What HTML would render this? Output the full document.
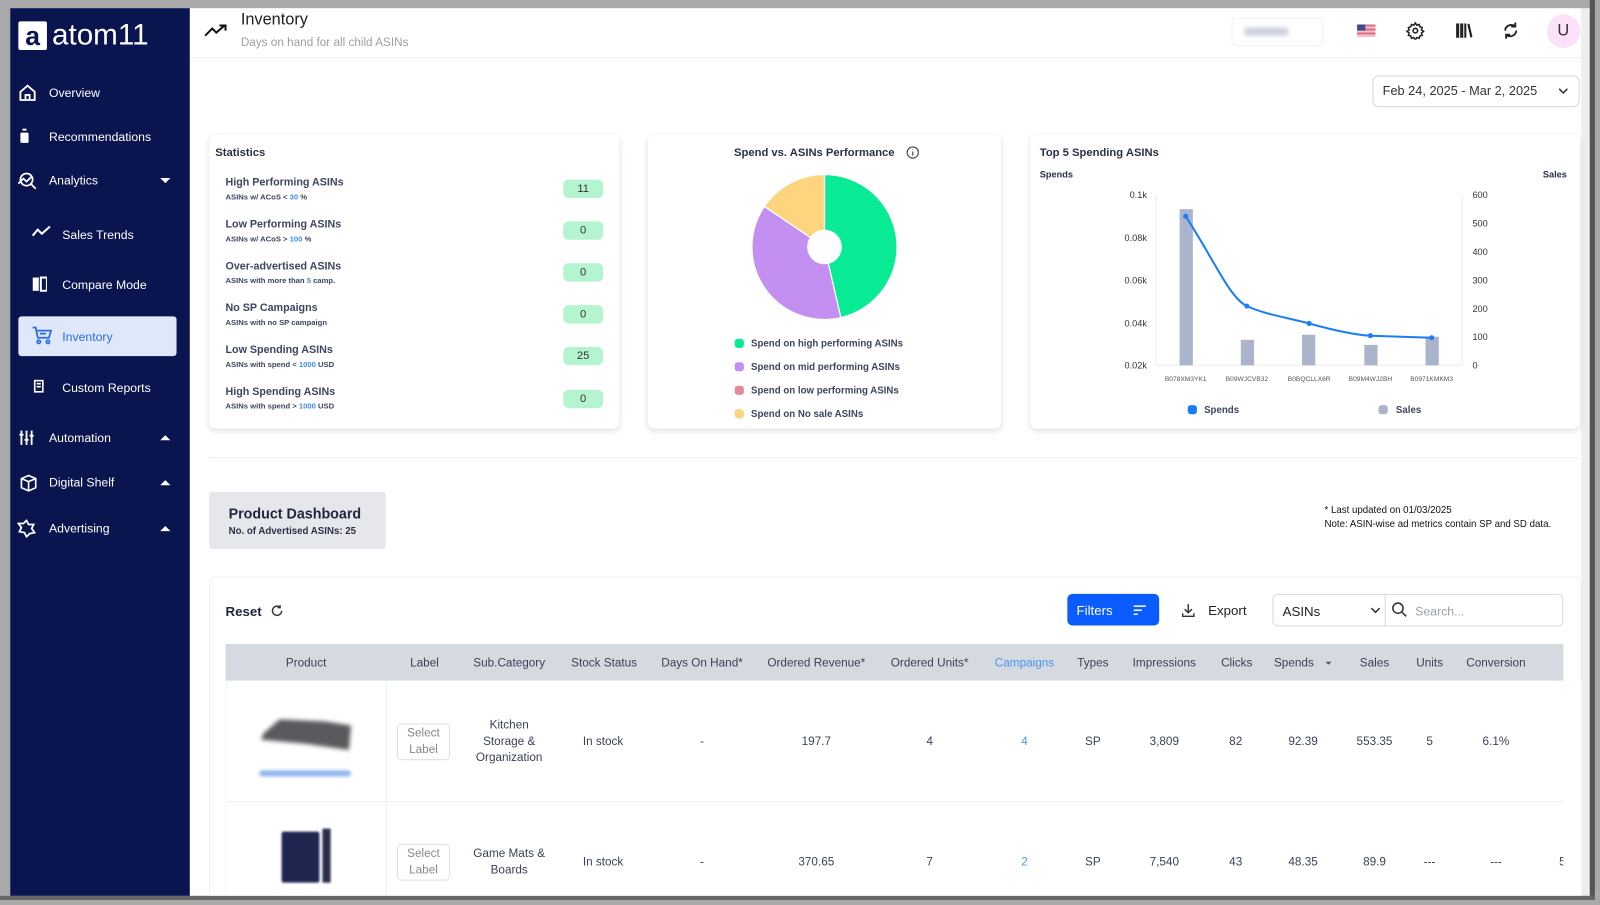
<!DOCTYPE html>
<html><head><meta charset="utf-8">
<style>
*{margin:0;padding:0;box-sizing:border-box}
html,body{width:1600px;height:905px;overflow:hidden;background:#a9a9a9;font-family:"Liberation Sans",sans-serif}
#w{position:absolute;left:0;top:0;width:1568px;height:887px;transform:scale(1.020408);transform-origin:0 0;background:#a9a9a9}
.a{position:absolute}
.c{position:absolute;transform:translate(-50%,-50%);white-space:nowrap}
.l{position:absolute;transform:translateY(-50%);white-space:nowrap}
.nav{color:#fff;font-size:12px}
.st{font-size:10.5px;font-weight:bold;color:#3d4560}
.ss{font-size:7.5px;font-weight:bold;color:#3d4560}
.ss b{color:#3b8cf0}
.bd{position:absolute;left:552px;width:39px;height:18px;background:#b4f5d0;border-radius:5px;font-size:11px;color:#333;text-align:center;line-height:18px}
.card{position:absolute;background:#fff;border-radius:6px;box-shadow:0 2px 6px rgba(0,0,0,.12)}
.th{font-size:11.5px;color:#3a4256}
.td{font-size:11.5px;color:#3a4256}
.lg{font-size:9.5px;font-weight:bold;color:#3d4560}
.dot{position:absolute;width:9px;height:9px;border-radius:3px}
.ax{font-size:9px;color:#333}
</style></head><body><div id="w">
<!-- main white -->
<div class="a" style="left:10px;top:8px;width:1540px;height:870px;background:#fff"></div>
<div class="a" style="left:1550px;top:8px;width:8px;height:870px;background:#eee"></div>
<div class="a" style="left:1558px;top:0;width:5px;height:887px;background:#555"></div>
<div class="a" style="left:0;top:878px;width:1563px;height:5px;background:#666"></div>
<!-- sidebar -->
<div class="a" style="left:10px;top:8px;width:176px;height:870px;background:#0a1550"></div>
<div class="a" style="left:18px;top:21px;width:28px;height:28px;background:#fff;border-radius:2px;color:#0a1550;font-weight:bold;font-size:26px;text-align:center;line-height:28px">a</div>
<div class="l" style="left:51px;top:35px;color:#fff;font-size:29px;font-weight:500">atom11</div>
<svg class="a" style="left:18px;top:82px" width="18" height="18" viewBox="0 0 18 18" fill="none" stroke="#fff" stroke-width="1.8"><path d="M2 8L9 2l7 6v8H2z M7 16v-5h4v5"/></svg>
<div class="l nav" style="left:48px;top:91px">Overview</div>
<svg class="a" style="left:19px;top:126px" width="10" height="15" viewBox="0 0 10 15" fill="#fff"><rect x="3" y="0" width="4" height="2"/><rect x="1" y="4" width="8" height="10" rx="1"/></svg>
<div class="l nav" style="left:48px;top:134px">Recommendations</div>
<svg class="a" style="left:17px;top:168px" width="20" height="18" viewBox="0 0 20 18" fill="none" stroke="#fff" stroke-width="1.7"><circle cx="9" cy="8" r="6"/><path d="M13 12l5 5M1 12l5-5 3 3 5-5"/></svg>
<div class="l nav" style="left:48px;top:177px">Analytics</div>
<div class="c" style="left:162px;top:177px;width:0;height:0;border-left:5px solid transparent;border-right:5px solid transparent;border-top:5px solid #fff"></div>
<svg class="a" style="left:31px;top:221px" width="19" height="12" viewBox="0 0 19 12" fill="none" stroke="#fff" stroke-width="2"><path d="M1 10l5-6 4 4 8-7"/></svg>
<div class="l nav" style="left:61px;top:230px">Sales Trends</div>
<svg class="a" style="left:32px;top:271px" width="14" height="15" viewBox="0 0 14 15" fill="#fff"><rect x="0" y="1" width="6" height="13"/><rect x="8" y="1" width="6" height="13" fill="none" stroke="#fff" stroke-width="2"/></svg>
<div class="l nav" style="left:61px;top:279px">Compare Mode</div>
<div class="a" style="left:18px;top:310px;width:155px;height:39px;background:#dfe7fb;border-radius:3px"></div>
<svg class="a" style="left:31px;top:320px" width="20" height="18" viewBox="0 0 20 18" fill="none" stroke="#2b6be6" stroke-width="1.7"><path d="M1 1h3l2 10h11l2-7H5M8 7h6"/><circle cx="7" cy="15" r="1.6"/><circle cx="16" cy="15" r="1.6"/></svg>
<div class="l" style="left:61px;top:330px;color:#2b6be6;font-size:12px">Inventory</div>
<svg class="a" style="left:33px;top:372px" width="10" height="13" viewBox="0 0 10 13" fill="none" stroke="#fff" stroke-width="1.6"><rect x="1" y="1" width="8" height="11"/><path d="M3 4h4M3 7h4"/></svg>
<div class="l nav" style="left:61px;top:380px">Custom Reports</div>
<svg class="a" style="left:18px;top:421px" width="16" height="16" viewBox="0 0 16 16" stroke="#fff" stroke-width="1.8"><path d="M3 1v14M8 1v14M13 1v14"/><path d="M1 5h4M6 10h4M11 6h4"/></svg>
<div class="l nav" style="left:48px;top:429px">Automation</div>
<div class="c" style="left:162px;top:429px;border-left:5px solid transparent;border-right:5px solid transparent;border-bottom:5px solid #fff"></div>
<svg class="a" style="left:19px;top:465px" width="18" height="17" viewBox="0 0 18 17" fill="none" stroke="#fff" stroke-width="1.6"><path d="M2 4l7-3 7 3v9l-7 3-7-3z M2 4l7 3 7-3 M9 7v9"/></svg>
<div class="l nav" style="left:48px;top:473px">Digital Shelf</div>
<div class="c" style="left:162px;top:473px;border-left:5px solid transparent;border-right:5px solid transparent;border-bottom:5px solid #fff"></div>
<svg class="a" style="left:17px;top:509px" width="18" height="18" viewBox="0 0 18 18" fill="none" stroke="#fff" stroke-width="1.7"><path d="M9 1l2 4 5 0-2 4 3 4-5 1-3 3-2-4-5-1 2-4-3-4 5 0z"/></svg>
<div class="l nav" style="left:48px;top:518px">Advertising</div>
<div class="c" style="left:162px;top:518px;border-left:5px solid transparent;border-right:5px solid transparent;border-bottom:5px solid #fff"></div>
<!-- top bar -->
<div class="a" style="left:186px;top:56px;width:1364px;height:1px;background:#eceef2"></div>
<svg class="a" style="left:200px;top:23px" width="24" height="14" viewBox="0 0 24 14" fill="none" stroke="#111" stroke-width="2"><path d="M1 12l7-7 4 4 8-7M15 2h6v5"/></svg>
<div class="l" style="left:236px;top:20px;font-size:16px;color:#222">Inventory</div>
<div class="l" style="left:236px;top:42px;font-size:11.5px;color:#9aa0a8">Days on hand for all child ASINs</div>
<div class="a" style="left:1207px;top:17px;width:90px;height:28px;border:1px solid #f2f2f2;border-radius:4px"></div>
<div class="a" style="left:1219px;top:27px;width:44px;height:8px;background:#ccd0da;border-radius:4px;filter:blur(2px)"></div>
<div class="a" style="left:1330px;top:24px;width:18px;height:12px;background:repeating-linear-gradient(#e06a80 0 2px,#f3c2cc 2px 4px)"></div>
<div class="a" style="left:1330px;top:24px;width:8px;height:6px;background:#3a4c8f"></div>
<svg class="a" style="left:1378px;top:21px" width="18" height="18" viewBox="0 0 24 24" fill="none" stroke="#222" stroke-width="2"><circle cx="12" cy="12" r="3"/><path d="M12 2l2 3 3-1 1 3 3 1-1 3 3 2-3 2 1 3-3 1-1 3-3-1-2 3-2-3-3 1-1-3-3-1 1-3-3-2 3-2-1-3 3-1 1-3 3 1z"/></svg>
<svg class="a" style="left:1426px;top:22px" width="17" height="16" viewBox="0 0 17 16" fill="#222"><rect x="1" y="1" width="3" height="14"/><rect x="5" y="1" width="3" height="14"/><rect x="9" y="1" width="2" height="14"/><path d="M12 2l2-1 3 13-2 1z"/></svg>
<svg class="a" style="left:1472px;top:21px" width="17" height="18" viewBox="0 0 17 18" fill="none" stroke="#222" stroke-width="1.8"><path d="M3 9a6 6 0 0 1 10-4M14 9a6 6 0 0 1-10 4M13 1v4H9M4 17v-4h4"/></svg>
<div class="a" style="left:1516px;top:14px;width:33px;height:33px;border-radius:50%;background:#fbe1f9"></div>
<div class="c" style="left:1532px;top:31px;font-size:16px;color:#333">U</div>
<!-- date -->
<div class="a" style="left:1345px;top:74px;width:203px;height:31px;border:1px solid #d5d8dd;border-radius:6px"></div>
<div class="l" style="left:1355px;top:89px;font-size:12.5px;color:#333">Feb 24, 2025 - Mar 2, 2025</div>
<svg class="a" style="left:1527px;top:86px" width="10" height="7" viewBox="0 0 10 7" fill="none" stroke="#333" stroke-width="1.5"><path d="M1 1l4 4 4-4"/></svg>
<!-- stats card -->
<div class="card" style="left:205px;top:132px;width:402px;height:288px"></div>
<div class="l" style="left:211px;top:150px;font-size:11px;font-weight:bold;color:#2a3146">Statistics</div>
<div class="l st" style="left:221px;top:179px">High Performing ASINs</div><div class="l ss" style="left:221px;top:193px">ASINs w/ ACoS &lt; <b>30</b> %</div><div class="bd" style="top:176px">11</div>
<div class="l st" style="left:221px;top:220px">Low Performing ASINs</div><div class="l ss" style="left:221px;top:234px">ASINs w/ ACoS &gt; <b>100</b> %</div><div class="bd" style="top:217px">0</div>
<div class="l st" style="left:221px;top:261px">Over-advertised ASINs</div><div class="l ss" style="left:221px;top:275px">ASINs with more than <b>5</b> camp.</div><div class="bd" style="top:258px">0</div>
<div class="l st" style="left:221px;top:302px">No SP Campaigns</div><div class="l ss" style="left:221px;top:316px">ASINs with no SP campaign</div><div class="bd" style="top:299px">0</div>
<div class="l st" style="left:221px;top:343px">Low Spending ASINs</div><div class="l ss" style="left:221px;top:357px">ASINs with spend &lt; <b>1000</b> USD</div><div class="bd" style="top:340px">25</div>
<div class="l st" style="left:221px;top:384px">High Spending ASINs</div><div class="l ss" style="left:221px;top:398px">ASINs with spend &gt; <b>1000</b> USD</div><div class="bd" style="top:382px">0</div>
<!-- pie card -->
<div class="card" style="left:635px;top:132px;width:346px;height:288px"></div>
<div class="c" style="left:798px;top:150px;font-size:11px;font-weight:bold;color:#2a3146">Spend vs. ASINs Performance</div>
<svg class="a" style="left:888px;top:143px" width="13" height="13" viewBox="0 0 13 13" fill="none" stroke="#444" stroke-width="1.1"><circle cx="6.5" cy="6.5" r="5.5"/><path d="M6.5 5.5v4M6.5 3.5v.5"/></svg>
<svg class="a" style="left:635px;top:132px" width="346" height="200" viewBox="635 132 346 200">
<path d="M808 242L808 171A71 71 0 0 1 824 311.2Z" fill="#08ea94" stroke="#fff" stroke-width="1.2"/>
<path d="M808 242L824 311.2A71 71 0 0 1 749.1 202.3Z" fill="#c38ff0" stroke="#fff" stroke-width="1.2"/>
<path d="M808 242L749.1 202.3A71 71 0 0 1 808 171Z" fill="#fcd57e" stroke="#fff" stroke-width="1.2"/>
<circle cx="808" cy="242" r="17" fill="#fff"/>
</svg>
<div class="dot" style="left:720px;top:332px;background:#08ea94"></div><div class="l lg" style="left:736px;top:337px">Spend on high performing ASINs</div>
<div class="dot" style="left:720px;top:355px;background:#c38ff0"></div><div class="l lg" style="left:736px;top:360px">Spend on mid performing ASINs</div>
<div class="dot" style="left:720px;top:378px;background:#e08a9a"></div><div class="l lg" style="left:736px;top:383px">Spend on low performing ASINs</div>
<div class="dot" style="left:720px;top:401px;background:#fcd57e"></div><div class="l lg" style="left:736px;top:406px">Spend on No sale ASINs</div>
<!-- bar card -->
<div class="card" style="left:1010px;top:132px;width:538px;height:288px"></div>
<div class="l" style="left:1019px;top:150px;font-size:11px;font-weight:bold;color:#2a3146">Top 5 Spending ASINs</div>
<div class="l" style="left:1019px;top:171px;font-size:9px;font-weight:bold;color:#2a3146">Spends</div>
<div class="l" style="left:1512px;top:171px;font-size:9px;font-weight:bold;color:#2a3146">Sales</div>
<div class="l ax" style="right:444px;top:191px">0.1k</div>
<div class="l ax" style="right:444px;top:233px">0.08k</div>
<div class="l ax" style="right:444px;top:275px">0.06k</div>
<div class="l ax" style="right:444px;top:317px">0.04k</div>
<div class="l ax" style="right:444px;top:358px">0.02k</div>
<div class="l ax" style="left:1443px;top:191px">600</div>
<div class="l ax" style="left:1443px;top:219px">500</div>
<div class="l ax" style="left:1443px;top:247px">400</div>
<div class="l ax" style="left:1443px;top:275px">300</div>
<div class="l ax" style="left:1443px;top:303px">200</div>
<div class="l ax" style="left:1443px;top:330px">100</div>
<div class="l ax" style="left:1443px;top:358px">0</div>
<svg class="a" style="left:1120px;top:180px" width="330" height="190" viewBox="1120 180 330 190">
<path d="M1133 191V358M1433 191V358M1133 358H1433" stroke="#eee" stroke-width="1"/>
<g fill="#aab4cb"><rect x="1156" y="205" width="13" height="153"/><rect x="1216" y="333" width="13" height="25"/><rect x="1276" y="328" width="13" height="30"/><rect x="1337" y="338" width="13" height="20"/><rect x="1397" y="330" width="13" height="28"/></g>
<path d="M1162 212C1190 255 1205 292 1222 300S1265 312 1283 317S1325 328 1343 329L1403 331" fill="none" stroke="#1c7cf5" stroke-width="2"/>
<g fill="#1c7cf5"><circle cx="1162" cy="212" r="2.5"/><circle cx="1222" cy="300" r="2.5"/><circle cx="1283" cy="317" r="2.5"/><circle cx="1343" cy="329" r="2.5"/><circle cx="1403" cy="331" r="2.5"/></g>
</svg>
<div class="c" style="left:1162px;top:372px;font-size:6.5px;color:#555">B078XM3YK1</div>
<div class="c" style="left:1222px;top:372px;font-size:6.5px;color:#555">B09WJCVB32</div>
<div class="c" style="left:1283px;top:372px;font-size:6.5px;color:#555">B0BQCLLX6R</div>
<div class="c" style="left:1343px;top:372px;font-size:6.5px;color:#555">B09M4WJ2BH</div>
<div class="c" style="left:1403px;top:372px;font-size:6.5px;color:#555">B0971KMKM3</div>
<div class="dot" style="left:1164px;top:397px;background:#1c7cf5"></div><div class="l lg" style="left:1180px;top:402px">Spends</div>
<div class="dot" style="left:1351px;top:397px;background:#aab4cb"></div><div class="l lg" style="left:1368px;top:402px">Sales</div>
<div class="a" style="left:205px;top:448px;width:1343px;height:1px;background:#eceef2"></div>
<!-- product dashboard -->
<div class="a" style="left:205px;top:482px;width:173px;height:56px;background:#e6e7eb;border-radius:3px"></div>
<div class="l" style="left:224px;top:503px;font-size:14px;font-weight:bold;color:#1f2740">Product Dashboard</div>
<div class="l" style="left:224px;top:521px;font-size:9.5px;font-weight:bold;color:#2a3146">No. of Advertised ASINs: 25</div>
<div class="l" style="left:1298px;top:500px;font-size:9.5px;color:#111">* Last updated on 01/03/2025</div>
<div class="l" style="left:1298px;top:514px;font-size:9.5px;color:#111">Note: ASIN-wise ad metrics contain SP and SD data.</div>
<!-- table card -->
<div class="a" style="left:205px;top:565px;width:1345px;height:320px;border:1px solid #eef0f3;border-radius:6px;background:#fff"></div>
<div class="l" style="left:221px;top:599px;font-size:13px;font-weight:bold;color:#1f2740">Reset</div>
<svg class="a" style="left:265px;top:592px" width="13" height="13" viewBox="0 0 13 13" fill="none" stroke="#333" stroke-width="1.4"><path d="M11 6.5A4.5 4.5 0 1 1 9 2.8M9.5 1v2.5H7"/></svg>
<div class="a" style="left:1046px;top:582px;width:90px;height:31px;background:#0b5cff;border-radius:5px"></div>
<div class="l" style="left:1055px;top:598px;font-size:13px;color:#fff">Filters</div>
<svg class="a" style="left:1110px;top:593px" width="14" height="10" viewBox="0 0 14 10" stroke="#fff" stroke-width="1.5"><path d="M1 1h12M1 5h8M1 9h4"/></svg>
<svg class="a" style="left:1158px;top:591px" width="13" height="14" viewBox="0 0 13 14" fill="none" stroke="#333" stroke-width="1.4"><path d="M6.5 1v8M3 6l3.5 3.5L10 6M1 10v3h11v-3"/></svg>
<div class="l" style="left:1184px;top:598px;font-size:13px;color:#222">Export</div>
<div class="a" style="left:1247px;top:582px;width:285px;height:32px;border:1px solid #d5d8dd;border-radius:5px"></div>
<div class="a" style="left:1357px;top:582px;width:1px;height:32px;background:#d5d8dd"></div>
<div class="l" style="left:1257px;top:599px;font-size:13px;color:#222">ASINs</div>
<svg class="a" style="left:1343px;top:595px" width="10" height="7" viewBox="0 0 10 7" fill="none" stroke="#333" stroke-width="1.5"><path d="M1 1l4 4 4-4"/></svg>
<svg class="a" style="left:1364px;top:590px" width="15" height="15" viewBox="0 0 15 15" fill="none" stroke="#333" stroke-width="1.5"><circle cx="6" cy="6" r="5"/><path d="M10 10l4 4"/></svg>
<div class="l" style="left:1387px;top:599px;font-size:12px;color:#9aa0a8">Search...</div>
<div class="a" style="left:221px;top:631px;width:1311px;height:36px;background:#d5d9e0"></div>
<div class="c th" style="left:300px;top:650px">Product</div>
<div class="c th" style="left:416px;top:650px">Label</div>
<div class="c th" style="left:499px;top:650px">Sub.Category</div>
<div class="c th" style="left:592px;top:650px">Stock Status</div>
<div class="c th" style="left:688px;top:650px">Days On Hand*</div>
<div class="c th" style="left:800px;top:650px">Ordered Revenue*</div>
<div class="c th" style="left:911px;top:650px">Ordered Units*</div>
<div class="c th" style="left:1004px;top:650px;color:#4c95f0">Campaigns</div>
<div class="c th" style="left:1071px;top:650px">Types</div>
<div class="c th" style="left:1141px;top:650px">Impressions</div>
<div class="c th" style="left:1212px;top:650px">Clicks</div>
<div class="c th" style="left:1268px;top:650px">Spends</div>
<div class="c" style="left:1302px;top:650px;border-left:3px solid transparent;border-right:3px solid transparent;border-top:3px solid #555"></div>
<div class="c th" style="left:1347px;top:650px">Sales</div>
<div class="c th" style="left:1401px;top:650px">Units</div>
<div class="c th" style="left:1466px;top:650px">Conversion</div>
<div class="a" style="left:378px;top:667px;width:1px;height:211px;background:#eceef2"></div>
<div class="a" style="left:221px;top:785px;width:1311px;height:1px;background:#eceef2"></div>
<div class="a" style="left:221px;top:667px;width:1px;height:211px;background:#f2f3f5"></div>
<!-- row1 -->
<svg class="a" style="left:250px;top:695px" width="100" height="50" viewBox="0 0 100 50" style="filter:blur(2px)"><path d="M8 24L24 10 68 12 94 16 92 40 50 34 6 30z" fill="#5a5a5e" style="filter:blur(2px)"/></svg>
<div class="a" style="left:254px;top:755px;width:90px;height:6px;background:#8fb4f0;border-radius:3px;filter:blur(1.5px)"></div>
<div class="a" style="left:389px;top:709px;width:52px;height:36px;border:1px solid #dfe1e5;border-radius:4px"></div>
<div class="c td" style="left:415px;top:719px;color:#888">Select</div><div class="c td" style="left:415px;top:735px;color:#888">Label</div>
<div class="c td" style="left:499px;top:711px">Kitchen</div><div class="c td" style="left:499px;top:727px">Storage &amp;</div><div class="c td" style="left:499px;top:743px">Organization</div>
<div class="c td" style="left:591px;top:727px">In stock</div>
<div class="c td" style="left:688px;top:727px">-</div>
<div class="c td" style="left:800px;top:727px">197.7</div>
<div class="c td" style="left:911px;top:727px">4</div>
<div class="c td" style="left:1004px;top:727px;color:#4c95f0">4</div>
<div class="c td" style="left:1071px;top:727px">SP</div>
<div class="c td" style="left:1141px;top:727px">3,809</div>
<div class="c td" style="left:1211px;top:727px">82</div>
<div class="c td" style="left:1277px;top:727px">92.39</div>
<div class="c td" style="left:1347px;top:727px">553.35</div>
<div class="c td" style="left:1401px;top:727px">5</div>
<div class="c td" style="left:1466px;top:727px">6.1%</div>
<!-- row2 -->
<div class="a" style="left:276px;top:815px;width:37px;height:50px;background:#1f2650;border-radius:2px;filter:blur(1px)"></div>
<div class="a" style="left:316px;top:812px;width:8px;height:53px;background:#2a2f4a;filter:blur(1px)"></div>
<div class="a" style="left:389px;top:827px;width:52px;height:36px;border:1px solid #dfe1e5;border-radius:4px"></div>
<div class="c td" style="left:415px;top:837px;color:#888">Select</div><div class="c td" style="left:415px;top:853px;color:#888">Label</div>
<div class="c td" style="left:499px;top:837px">Game Mats &amp;</div><div class="c td" style="left:499px;top:853px">Boards</div>
<div class="c td" style="left:591px;top:845px">In stock</div>
<div class="c td" style="left:688px;top:845px">-</div>
<div class="c td" style="left:800px;top:845px">370.65</div>
<div class="c td" style="left:911px;top:845px">7</div>
<div class="c td" style="left:1004px;top:845px;color:#4c95f0">2</div>
<div class="c td" style="left:1071px;top:845px">SP</div>
<div class="c td" style="left:1141px;top:845px">7,540</div>
<div class="c td" style="left:1211px;top:845px">43</div>
<div class="c td" style="left:1277px;top:845px">48.35</div>
<div class="c td" style="left:1347px;top:845px">89.9</div>
<div class="c td" style="left:1401px;top:845px">---</div>
<div class="c td" style="left:1466px;top:845px">---</div>
<div class="l td" style="left:1528px;top:845px">5</div>
<div class="a" style="left:1532px;top:667px;width:18px;height:211px;background:#fff"></div>
<!-- bottom frame cover -->
<div class="a" style="left:0;top:878px;width:1568px;height:9px;background:#a9a9a9"></div>
<div class="a" style="left:0;top:878px;width:1563px;height:4px;background:#666"></div>
</div></body></html>
